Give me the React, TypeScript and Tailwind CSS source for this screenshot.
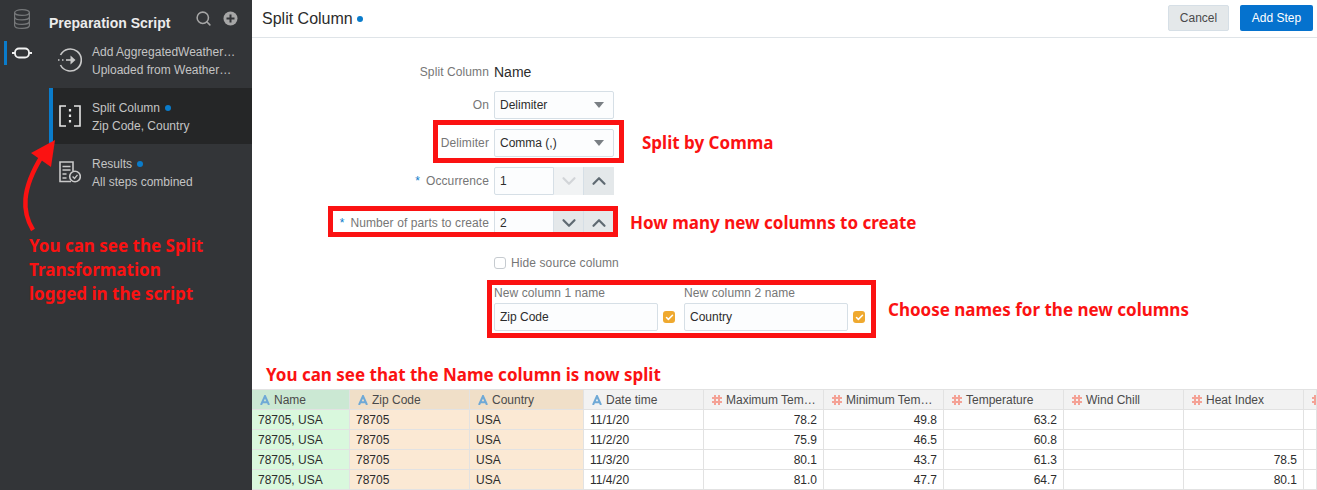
import React from "react";
import { Search, ChevronDown, ChevronUp, Check } from "lucide-react";

const Dot = () => <span className="inline-block w-[6px] h-[6px] rounded-full bg-[#0a7ccb]" />;

const StepIcon = ({ kind }: { kind: "add" | "split" | "results" }) => {
  if (kind === "add")
    return (
      <svg width="24" height="24" viewBox="0 0 24 24" fill="none" stroke="#c9c9c9" strokeWidth="1.6">
        <path d="M2.5 7A11 11 0 1 1 2.5 17" />
        <path d="M0 12h1.5M4 12h1.5" />
        <path d="M8 12h8" />
        <path d="M12.5 7.5l5 4.5-5 4.5z" fill="#c9c9c9" stroke="none" />
      </svg>
    );
  if (kind === "split")
    return (
      <svg width="22" height="22" viewBox="0 0 22 22" fill="none" stroke="#e6e6e6" strokeWidth="1.6">
        <path d="M7 1H1v20h6M15 1h6v20h-6" />
        <path d="M11 4v2.5M11 9.5V12M11 15v2.5" strokeWidth="2.2" />
      </svg>
    );
  return (
    <svg width="22" height="22" viewBox="0 0 22 22" fill="none" stroke="#c9c9c9" strokeWidth="1.6">
      <path d="M12 20.5H1V1h13v9" />
      <path d="M3.5 5.5h8M3.5 9h8M3.5 13h4M3.5 17h4" />
      <circle cx="16" cy="15.5" r="5.3" fill="#333538" />
      <path d="M13.6 15.5l1.9 2 3-3.6" strokeWidth="1.3" />
    </svg>
  );
};

const Step = ({ kind, title, sub, dot, active }: { kind: "add" | "split" | "results"; title: string; sub: string; dot?: boolean; active?: boolean }) => (
  <div className={`h-14 flex items-center border-l-4 ${active ? "bg-[#252627] border-[#0a7ccb]" : "border-transparent"}`}>
    <div className="w-[39px] flex justify-center pr-[5px] shrink-0">
      <StepIcon kind={kind} />
    </div>
    <div className="min-w-0 text-[12px] leading-[18px] text-[#c4c4c4] w-[152px] pt-[2px]">
      <div className="flex items-center gap-[5px] whitespace-nowrap">
        <span>{title}</span>
        {dot && <Dot />}
      </div>
      <div className="whitespace-nowrap">{sub}</div>
    </div>
  </div>
);

const Sidebar = () => (
  <aside className="w-[252px] shrink-0 bg-[#333538] flex h-full">
    <div className="w-[49px] shrink-0 relative">
      <div className="flex justify-center pt-[9px] pr-[5px]">
        <svg width="16" height="20" viewBox="0 0 16 20" fill="none" stroke="#77797b" strokeWidth="1.2">
          <ellipse cx="8" cy="3.5" rx="7.4" ry="2.9" />
          <path d="M0.6 3.5v13c0 1.6 3.3 2.9 7.4 2.9s7.4-1.3 7.4-2.9v-13" />
          <path d="M0.6 8c0 1.6 3.3 2.9 7.4 2.9s7.4-1.3 7.4-2.9M0.6 12.5c0 1.6 3.3 2.9 7.4 2.9s7.4-1.3 7.4-2.9" />
        </svg>
      </div>
      <div className="flex items-center mt-[12px] pl-1 h-6">
        <span className="w-[3px] h-6 bg-[#0a7ccb]" />
        <svg className="ml-[5px]" width="20" height="12" viewBox="0 0 20 12" fill="none" stroke="#f2f2f2" strokeWidth="1.8">
          <rect x="3" y="1.5" width="14" height="9" rx="4" />
          <path d="M0 6h3M17 6h3" />
        </svg>
      </div>
    </div>
    <div className="flex-1 min-w-0">
      <div className="h-8 relative flex items-center">
        <span className="text-[14px] font-bold text-[#ececec] whitespace-nowrap mt-[14px]">Preparation Script</span>
        <Search size={17} color="#a6a6a6" strokeWidth={2.2} className="absolute left-[146px] top-[10px]" />
        <svg className="absolute left-[174px] top-[11px]" width="15" height="15" viewBox="0 0 15 15">
          <circle cx="7.5" cy="7.5" r="7" fill="#a6a6a6" />
          <path d="M7.5 3.5v8M3.5 7.5h8" stroke="#333538" strokeWidth="2" />
        </svg>
      </div>
      <Step kind="add" title="Add AggregatedWeather…" sub="Uploaded from Weather…" />
      <Step kind="split" title="Split Column" sub="Zip Code, Country" dot active />
      <Step kind="results" title="Results" sub="All steps combined" dot />
    </div>
  </aside>
);

const Label = ({ children, req }: { children: string; req?: boolean }) => (
  <div className="w-[242px] shrink-0 text-right text-[12px] tracking-[0.1px] text-[#767676] pr-[5px] whitespace-nowrap">
    {req && <span className="text-[#0a7ccb] mr-[6px]">*</span>}
    {children}
  </div>
);

const Select = ({ value }: { value: string }) => (
  <div className="w-[120px] h-[28px] border border-[#d6dfe6] rounded-[2px] bg-[#fcfdfe] flex items-center justify-between pl-[5px] pr-[9px] text-[12px] text-[#2c2c2c]">
    <span>{value}</span>
    <span className="w-0 h-0 border-l-[5px] border-r-[5px] border-t-[6px] border-l-transparent border-r-transparent border-t-[#7a7f84]" />
  </div>
);

const Stepper = ({ value, downOff }: { value: string; downOff?: boolean }) => (
  <div className="w-[120px] h-[28px] flex text-[12px] text-[#2c2c2c]">
    <div className="w-[60px] border border-[#d6dfe6] rounded-l-[2px] bg-[#fcfdfe] flex items-center pl-[5px]">{value}</div>
    <div className={`w-[30px] flex items-center justify-center border-r border-[#d6dfe6] ${downOff ? "bg-[#f1f3f4]" : "bg-[#e4e8ea]"}`}>
      <ChevronDown size={22} strokeWidth={2.4} color={downOff ? "#d2d5d8" : "#5f6a72"} />
    </div>
    <div className="w-[30px] flex items-center justify-center bg-[#e4e8ea]">
      <ChevronUp size={22} strokeWidth={2.4} color="#5f6a72" />
    </div>
  </div>
);

const Tick = () => (
  <span className="w-3 h-3 rounded-[3px] bg-[#efa92f] flex items-center justify-center">
    <Check size={9} strokeWidth={4} color="#fff" />
  </span>
);

const NameField = ({ label, value }: { label: string; value: string }) => (
  <div className="w-[190px] shrink-0">
    <div className="text-[12px] leading-[16px] tracking-[0.1px] text-[#767676] mb-[2px]">{label}</div>
    <div className="flex items-center gap-[5px]">
      <div className="w-[164px] h-[28px] border border-[#d6dfe6] rounded-[2px] bg-[#fcfdfe] flex items-center pl-[5px] text-[12px] text-[#2c2c2c]">{value}</div>
      <Tick />
    </div>
  </div>
);

const Form = () => (
  <div className="flex-1 pt-[26px] flex flex-col">
    <div className="flex items-center h-4 mb-[11px]">
      <Label>Split Column</Label>
      <span className="text-[14px] text-[#2c2c2c]">Name</span>
    </div>
    <div className="flex items-center h-7 mb-[10px]">
      <Label>On</Label>
      <Select value="Delimiter" />
    </div>
    <div className="flex items-center h-7 mb-[10px]">
      <Label>Delimiter</Label>
      <Select value="Comma (,)" />
    </div>
    <div className="flex items-center h-7 mb-[14px]">
      <Label req>Occurrence</Label>
      <Stepper value="1" downOff />
    </div>
    <div className="flex items-center h-7">
      <Label req>Number of parts to create</Label>
      <Stepper value="2" />
    </div>
    <div className="flex items-center h-4 mt-[18px] ml-[242px] gap-[5px] text-[12px] tracking-[0.1px] text-[#767676]">
      <span className="w-3 h-3 rounded-[3px] border border-[#c6cbd0] bg-white" />
      <span>Hide source column</span>
    </div>
    <div className="flex mt-[14px] ml-[242px]">
      <NameField label="New column 1 name" value="Zip Code" />
      <NameField label="New column 2 name" value="Country" />
    </div>
  </div>
);

const TextGlyph = () => (
  <svg width="10" height="10" viewBox="0 0 10 10" fill="none" stroke="#6fa9d6" strokeWidth="2" className="shrink-0">
    <path d="M1 10L5 1l4 9M2.5 7.2h5" />
  </svg>
);

const NumGlyph = () => (
  <svg width="10" height="10" viewBox="0 0 10 10" fill="none" stroke="#f4a296" strokeWidth="2" className="shrink-0">
    <path d="M3 0v10M7 0v10M0 3h10M0 7h10" />
  </svg>
);

const gridCols = "grid grid-cols-[98px_120px_114px_120px_120px_120px_120px_120px_120px_13px]";

const headers: { t: string; kind: "a" | "n"; bg: string }[] = [
  { t: "Name", kind: "a", bg: "bg-[#cbe8d3]" },
  { t: "Zip Code", kind: "a", bg: "bg-[#f0dfc8]" },
  { t: "Country", kind: "a", bg: "bg-[#f0dfc8]" },
  { t: "Date time", kind: "a", bg: "bg-[#f2f2f2]" },
  { t: "Maximum Tem…", kind: "n", bg: "bg-[#f2f2f2]" },
  { t: "Minimum Tem…", kind: "n", bg: "bg-[#f2f2f2]" },
  { t: "Temperature", kind: "n", bg: "bg-[#f2f2f2]" },
  { t: "Wind Chill", kind: "n", bg: "bg-[#f2f2f2]" },
  { t: "Heat Index", kind: "n", bg: "bg-[#f2f2f2]" },
  { t: "", kind: "n", bg: "bg-[#f2f2f2]" },
];

const rows = [
  ["11/1/20", "78.2", "49.8", "63.2", "", ""],
  ["11/2/20", "75.9", "46.5", "60.8", "", ""],
  ["11/3/20", "80.1", "43.7", "61.3", "", "78.5"],
  ["11/4/20", "81.0", "47.7", "64.7", "", "80.1"],
];

const Cell = ({ children, cls }: { children?: React.ReactNode; cls: string }) => (
  <div className={`h-5 border-r border-b border-[#e2e2e2] text-[12px] leading-[20px] text-[#2c2c2c] whitespace-nowrap overflow-hidden ${cls}`}>{children}</div>
);

const Table = () => (
  <div className="h-[101px] shrink-0 border-t border-[#e2e2e2] overflow-hidden">
    <div className={gridCols}>
      {headers.map((h, i) => (
        <div key={i} className={`h-5 border-r border-b border-[#e2e2e2] flex items-center gap-1 pl-2 text-[12px] text-[#4a4a4a] whitespace-nowrap overflow-hidden ${h.bg}`}>
          {h.kind === "a" ? <TextGlyph /> : <NumGlyph />}
          {h.t && <span>{h.t}</span>}
        </div>
      ))}
    </div>
    {rows.map((r, i) => (
      <div key={i} className={gridCols}>
        <Cell cls="bg-[#d9f8dd] pl-[6px]">78705, USA</Cell>
        <Cell cls="bg-[#fbe9d4] pl-[6px]">78705</Cell>
        <Cell cls="bg-[#fbe9d4] pl-[6px]">USA</Cell>
        <Cell cls="bg-white pl-[6px]">{r[0]}</Cell>
        <Cell cls="bg-white text-right pr-[6px]">{r[1]}</Cell>
        <Cell cls="bg-white text-right pr-[6px]">{r[2]}</Cell>
        <Cell cls="bg-white text-right pr-[6px]">{r[3]}</Cell>
        <Cell cls="bg-white text-right pr-[6px]">{r[4]}</Cell>
        <Cell cls="bg-white text-right pr-[6px]">{r[5]}</Cell>
        <Cell cls="bg-white" />
      </div>
    ))}
  </div>
);

const note = "absolute text-[#fb1212] font-bold text-[17px] leading-[24px] whitespace-nowrap [font-family:'Noto_Sans',sans-serif]";

const Overlays = () => (
  <>
    <div className="absolute left-[433px] top-[120px] w-[191px] h-[43px] border-[5px] border-[#fb1212]" />
    <div className="absolute left-[328px] top-[206px] w-[290px] h-[31px] border-[5px] border-[#fb1212]" />
    <div className="absolute left-[487px] top-[280px] w-[389px] h-[58px] border-[5px] border-[#fb1212]" />
    <span className={`${note} left-[642px] top-[131px]`}>Split by Comma</span>
    <span className={`${note} left-[630px] top-[211px]`}>How many new columns to create</span>
    <span className={`${note} left-[888px] top-[298px]`}>Choose names for the new columns</span>
    <span className={`${note} left-[266px] top-[363px]`}>You can see that the Name column is now split</span>
    <div className={`${note} left-[29px] top-[234px]`}>
      You can see the Split
      <br />
      Transformation
      <br />
      logged in the script
    </div>
    <svg className="absolute left-0 top-0" width="70" height="240" viewBox="0 0 70 240" fill="none">
      <path d="M33 230C22 212 21 190 42 156" stroke="#fb1212" strokeWidth="4.5" />
      <path d="M55 140L31 153L51 167Z" fill="#fb1212" />
    </svg>
  </>
);

export default function App() {
  return (
    <div className="relative w-[1317px] h-[490px] overflow-hidden flex bg-white [font-family:'Liberation_Sans',Arial,sans-serif]">
      <Sidebar />
      <main className="flex-1 min-w-0 flex flex-col">
        <header className="h-[38px] shrink-0 border-b border-[#dfe4e8] flex items-center pl-[10px] pr-1">
          <span className="text-[16px] text-[#2c2c2c] mt-[1px]">Split Column</span>
          <span className="ml-[4px] flex"><Dot /></span>
          <button className="ml-auto w-[61px] h-[26px] mb-[1px] bg-[#e4e8ea] border border-[#d6dfe6] rounded-[2px] text-[12px] text-[#4a4a4a]">Cancel</button>
          <button className="ml-[11px] w-[73px] h-[26px] mb-[1px] bg-[#0572ce] rounded-[2px] text-[12px] text-white">Add Step</button>
        </header>
        <Form />
        <Table />
      </main>
      <Overlays />
    </div>
  );
}
